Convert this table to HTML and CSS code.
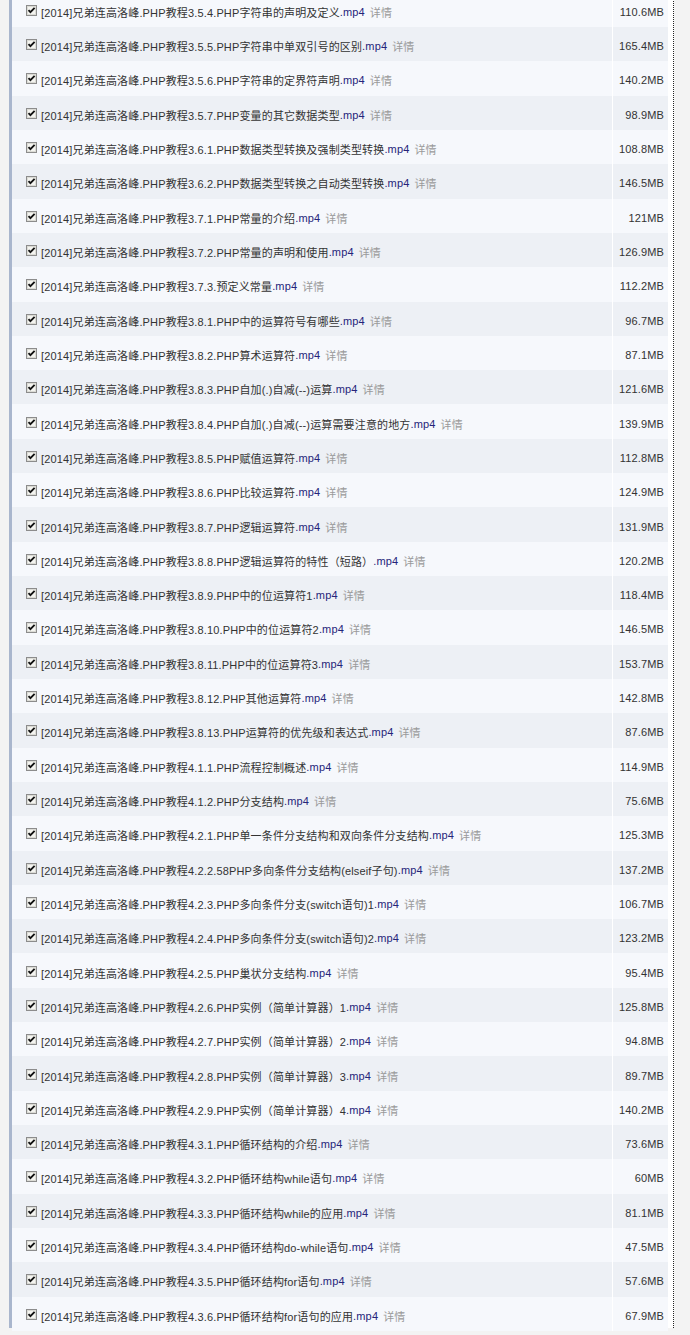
FILE: index.html
```html
<!DOCTYPE html>
<html lang="zh-CN">
<head>
<meta charset="utf-8">
<title>文件列表</title>
<link rel="stylesheet" href="styles.css">
</head>
<body>
<div class="page">
  <div class="frame">
    <div class="list" id="list"></div>
  </div>
</div>
<script src="app.js"></script>
</body>
</html>
```

FILE: app.js
```js
var rows = [
  ["3.5.4.PHP字符串的声明及定义", "110.6MB"],
  ["3.5.5.PHP字符串中单双引号的区别", "165.4MB"],
  ["3.5.6.PHP字符串的定界符声明", "140.2MB"],
  ["3.5.7.PHP变量的其它数据类型", "98.9MB"],
  ["3.6.1.PHP数据类型转换及强制类型转换", "108.8MB"],
  ["3.6.2.PHP数据类型转换之自动类型转换", "146.5MB"],
  ["3.7.1.PHP常量的介绍", "121MB"],
  ["3.7.2.PHP常量的声明和使用", "126.9MB"],
  ["3.7.3.预定义常量", "112.2MB"],
  ["3.8.1.PHP中的运算符号有哪些", "96.7MB"],
  ["3.8.2.PHP算术运算符", "87.1MB"],
  ["3.8.3.PHP自加(.)自减(--)运算", "121.6MB"],
  ["3.8.4.PHP自加(.)自减(--)运算需要注意的地方", "139.9MB"],
  ["3.8.5.PHP赋值运算符", "112.8MB"],
  ["3.8.6.PHP比较运算符", "124.9MB"],
  ["3.8.7.PHP逻辑运算符", "131.9MB"],
  ["3.8.8.PHP逻辑运算符的特性（短路）", "120.2MB"],
  ["3.8.9.PHP中的位运算符1", "118.4MB"],
  ["3.8.10.PHP中的位运算符2", "146.5MB"],
  ["3.8.11.PHP中的位运算符3", "153.7MB"],
  ["3.8.12.PHP其他运算符", "142.8MB"],
  ["3.8.13.PHP运算符的优先级和表达式", "87.6MB"],
  ["4.1.1.PHP流程控制概述", "114.9MB"],
  ["4.1.2.PHP分支结构", "75.6MB"],
  ["4.2.1.PHP单一条件分支结构和双向条件分支结构", "125.3MB"],
  ["4.2.2.58PHP多向条件分支结构(elseif子句)", "137.2MB"],
  ["4.2.3.PHP多向条件分支(switch语句)1", "106.7MB"],
  ["4.2.4.PHP多向条件分支(switch语句)2", "123.2MB"],
  ["4.2.5.PHP巢状分支结构", "95.4MB"],
  ["4.2.6.PHP实例（简单计算器）1", "125.8MB"],
  ["4.2.7.PHP实例（简单计算器）2", "94.8MB"],
  ["4.2.8.PHP实例（简单计算器）3", "89.7MB"],
  ["4.2.9.PHP实例（简单计算器）4", "140.2MB"],
  ["4.3.1.PHP循环结构的介绍", "73.6MB"],
  ["4.3.2.PHP循环结构while语句", "60MB"],
  ["4.3.3.PHP循环结构while的应用", "81.1MB"],
  ["4.3.4.PHP循环结构do-while语句", "47.5MB"],
  ["4.3.5.PHP循环结构for语句", "57.6MB"],
  ["4.3.6.PHP循环结构for语句的应用", "67.9MB"]
];
var box = '<svg class="cb" width="11" height="11" viewBox="0 0 11 11"><rect x="0.5" y="0.5" width="10" height="10" fill="#f4f4f0" stroke="#8c8c8c"/><rect x="1.5" y="1.5" width="8" height="8" fill="none" stroke="#dcdcd6"/><path d="M2.5 5.2 L4.4 7.2 L8.6 2.8" fill="none" stroke="#111" stroke-width="1.8"/></svg>';
var html = "";
for (var i = 0; i < rows.length; i++) {
  html += '<div class="row ' + (i % 2 ? "even" : "odd") + '">' +
    '<div class="name">' + box +
    '<span class="fn">[2014]兄弟连高洛峰.PHP教程' + rows[i][0] + '</span><span class="ext">.mp4</span>' +
    '<span class="more">详情</span></div>' +
    '<div class="size">' + rows[i][1] + '</div></div>';
}
document.getElementById("list").innerHTML = html;
```

FILE: styles.css
```css
html, body {
  margin: 0;
  padding: 0;
}
body {
  background: #f3f3f3;
  font-family: "Liberation Sans", "Noto Sans CJK SC", sans-serif;
  font-size: 11px;
  letter-spacing: 0.15px;
  color: #333;
  overflow: hidden;
}
.page {
  height: 1335px;
  overflow: hidden;
}
.frame {
  margin-left: 9px;
  width: 656px;
  border-left: 3px solid #a9b6cd;
  border-right: 1px dotted #222;
  background: #fff;
  padding-right: 5px;
  height: 1335px;
}
.list {
  margin-top: -7.3px;
}
.row {
  display: flex;
  height: 34.316px;
}
.row.odd { background: #f6f8fc; }
.row.even { background: #edf0f5; }
.name {
  flex: 1;
  display: flex;
  align-items: center;
  padding: 4px 0 0 14px;
  white-space: nowrap;
  border-right: 1px solid #fff;
}
.cb {
  flex: none;
  margin-right: 4px;
  margin-top: -3px;
}
.fn { color: #333; }
.ext { color: #25257a; }
.more {
  color: #9a9a9a;
  margin-left: 5px;
}
.size {
  width: 55px;
  flex: none;
  display: flex;
  align-items: center;
  justify-content: flex-end;
  padding: 4px 4px 0 0;
  box-sizing: border-box;
  color: #333;
}
```
